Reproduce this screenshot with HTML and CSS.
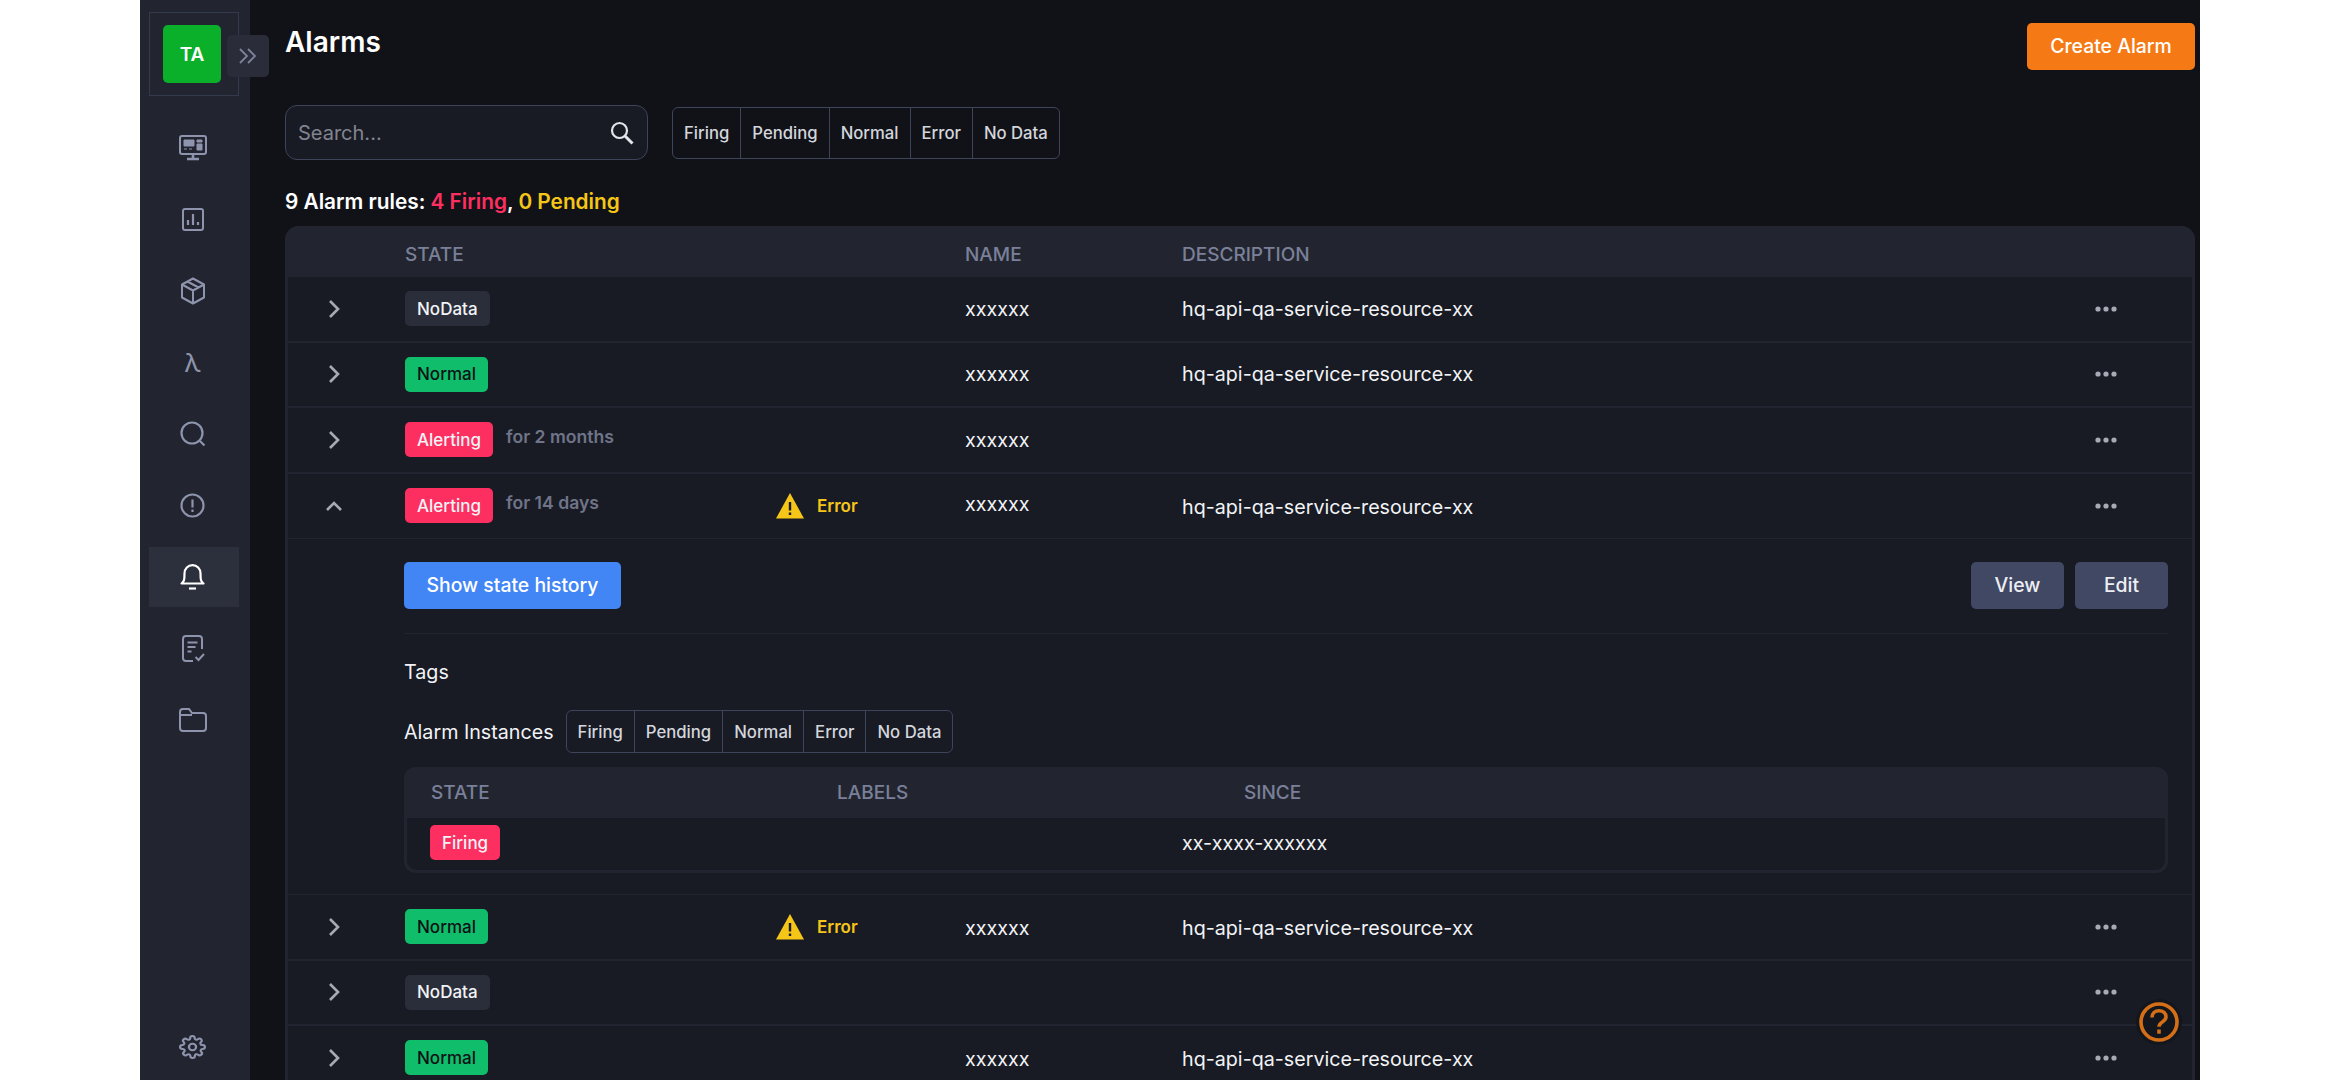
FILE: index.html
```html
<!DOCTYPE html>
<html lang="en">
<head>
    <meta charset="UTF-8">
    <meta name="viewport" content="width=device-width, initial-scale=1.0">
    <title>Alarms</title>
    <link rel="stylesheet" href="styles.css">
</head>
<body>
    <svg class="sprite" aria-hidden="true">
        <symbol id="chevron-right" viewBox="0 0 12 20"><path d="M2 2l8 8-8 8" fill="none" stroke="currentColor" stroke-width="2.6"/></symbol>
        <symbol id="chevron-up" viewBox="0 0 18 12"><path d="M2 10l7-7 7 7" fill="none" stroke="currentColor" stroke-width="2.6"/></symbol>
        <symbol id="dots" viewBox="0 0 22 6"><circle cx="3" cy="3" r="2.6"/><circle cx="11" cy="3" r="2.6"/><circle cx="19" cy="3" r="2.6"/></symbol>
        <symbol id="warning" viewBox="0 0 28 26"><path d="M14 0L28 25.500H0z"/><path d="M12.800 9h2.400v8.500h-2.400zM12.800 19.500h2.400v2.400h-2.400z" fill="#181b24"/></symbol>
    </svg>

    <div class="app">
        <aside class="sidebar">
            <div class="logo-box">
                <div class="logo">TA</div>
                <button class="collapse">
                    <svg width="20" height="18" viewBox="0 0 20 18" fill="none" stroke="currentColor" stroke-width="1.800"><path d="M2 2l7 7-7 7M10 2l7 7-7 7"/></svg>
                </button>
            </div>
            <nav class="nav">
                <a class="nav-item">
                    <svg width="28" height="26" viewBox="0 0 28 26" fill="none" stroke="currentColor" stroke-width="2"><rect x="1" y="1" width="26" height="18" rx="2"/><path d="M14 19v4M8 24h12" stroke-width="2.600"/><path d="M5 5h10v6H5zM5 14h3M10 14h3M18 5h5v2h-5zM18 9h5v6h-5z" fill="currentColor" stroke-width="1"/></svg>
                </a>
                <a class="nav-item">
                    <svg width="22" height="23" viewBox="0 0 22 23" fill="none" stroke="currentColor" stroke-width="2"><rect x="1" y="1" width="20" height="21" rx="2"/><path d="M6 17v-5M11 17V6M16 17v-3" stroke-width="2.200"/></svg>
                </a>
                <a class="nav-item">
                    <svg width="26" height="28" viewBox="0 0 26 28" fill="none" stroke="currentColor" stroke-width="2" stroke-linejoin="round"><path d="M13 1.500l11 6v13l-11 6-11-6v-13zM2 7.500l11 6 11-6M13 13.500v13M7.500 4.500l11 6"/></svg>
                </a>
                <a class="nav-item lambda">λ</a>
                <a class="nav-item">
                    <svg width="26" height="26" viewBox="0 0 26 26" fill="none" stroke="currentColor" stroke-width="2.200"><circle cx="12" cy="12" r="10.500"/><path d="M20 20l4.500 4.500"/></svg>
                </a>
                <a class="nav-item">
                    <svg width="25" height="25" viewBox="0 0 25 25" fill="none" stroke="currentColor" stroke-width="2.200"><circle cx="12.500" cy="12.500" r="11"/><path d="M12.500 6.500v8M12.500 16.500v2.500"/></svg>
                </a>
                <a class="nav-item active">
                    <svg width="25" height="26" viewBox="0 0 25 26" fill="none" stroke="currentColor" stroke-width="2.200"><path d="M1.500 19.500c2.500-2 3-3 3-10C4.500 4.500 8 1.200 12.500 1.200s8 3.300 8 8.300c0 7 .5 8 3 10z" stroke-linejoin="round"/><path d="M9 24.500h7"/></svg>
                </a>
                <a class="nav-item">
                    <svg width="24" height="27" viewBox="0 0 24 27" fill="none" stroke="currentColor" stroke-width="2"><path d="M21 14V4a3 3 0 0 0-3-3H5a3 3 0 0 0-3 3v19a3 3 0 0 0 3 3h7"/><path d="M6.500 7.500h10M6.500 12h8M6.500 16.500h4M14.500 22l3 3 5.500-6"/></svg>
                </a>
                <a class="nav-item">
                    <svg width="28" height="24" viewBox="0 0 28 24" fill="none" stroke="currentColor" stroke-width="2"><path d="M1 4a3 3 0 0 1 3-3h6l3 4h11a3 3 0 0 1 3 3v12a3 3 0 0 1-3 3H4a3 3 0 0 1-3-3z"/><path d="M1 7h12"/></svg>
                </a>
                <a class="nav-item nav-bottom">
                    <svg width="27" height="24" viewBox="0 0 24 24" preserveAspectRatio="none" fill="none" stroke="currentColor" stroke-width="2"><circle cx="12" cy="12" r="3.200"/><path d="M19.400 15a1.650 1.650 0 0 0 .33 1.820l.06.06a2 2 0 0 1-2.830 2.830l-.06-.06a1.650 1.650 0 0 0-2.820 1.180V21a2 2 0 0 1-4 0v-.09a1.650 1.650 0 0 0-2.820-1.180l-.06.06a2 2 0 0 1-2.830-2.830l.06-.06A1.650 1.650 0 0 0 3.090 14H3a2 2 0 0 1 0-4h.09a1.650 1.650 0 0 0 1.180-2.820l-.06-.06a2 2 0 0 1 2.830-2.830l.06.06A1.650 1.650 0 0 0 9.920 3.170V3a2 2 0 0 1 4 0v.09a1.650 1.650 0 0 0 2.820 1.180l.06-.06a2 2 0 0 1 2.830 2.830l-.06.06A1.650 1.650 0 0 0 20.910 10H21a2 2 0 0 1 0 4h-.09a1.650 1.650 0 0 0-1.510 1z"/></svg>
                </a>
            </nav>
        </aside>

        <main class="main">
            <header class="page-header">
                <h1>Alarms</h1>
                <button class="btn btn-orange">Create Alarm</button>
            </header>

            <div class="toolbar">
                <div class="search">
                    <span class="search-text">Search...</span>
                    <svg width="24" height="24" viewBox="0 0 24 24" fill="none" stroke="#e4e5ea" stroke-width="2.200"><circle cx="9.500" cy="9.500" r="7.500"/><path d="M15 15l7.500 7.500" stroke-width="3"/></svg>
                </div>
                <div class="filters">
                    <span>Firing</span><span>Pending</span><span>Normal</span><span>Error</span><span>No Data</span>
                </div>
            </div>

            <p class="summary">9 Alarm rules: <span class="red">4 Firing</span>, <span class="yellow">0 Pending</span></p>

            <section class="table">
                <div class="row table-head">
                    <div></div>
                    <div>STATE</div>
                    <div>NAME</div>
                    <div>DESCRIPTION</div>
                    <div></div>
                </div>

                <div class="row">
                    <svg class="chev" width="12" height="20"><use href="#chevron-right"/></svg>
                    <div class="state"><div class="state-main"><span class="badge badge-grey">NoData</span></div></div>
                    <div>xxxxxx</div>
                    <div>hq-api-qa-service-resource-xx</div>
                    <svg class="dots" width="22" height="6"><use href="#dots"/></svg>
                </div>
                <div class="row">
                    <svg class="chev" width="12" height="20"><use href="#chevron-right"/></svg>
                    <div class="state"><div class="state-main"><span class="badge badge-green">Normal</span></div></div>
                    <div>xxxxxx</div>
                    <div>hq-api-qa-service-resource-xx</div>
                    <svg class="dots" width="22" height="6"><use href="#dots"/></svg>
                </div>
                <div class="row">
                    <svg class="chev" width="12" height="20"><use href="#chevron-right"/></svg>
                    <div class="state"><div class="state-main"><span class="badge badge-red">Alerting</span><span class="since">for 2 months</span></div></div>
                    <div>xxxxxx</div>
                    <div></div>
                    <svg class="dots" width="22" height="6"><use href="#dots"/></svg>
                </div>
                <div class="row row-open">
                    <svg class="chev" width="18" height="12"><use href="#chevron-up"/></svg>
                    <div class="state">
                        <div class="state-main"><span class="badge badge-red">Alerting</span><span class="since">for 14 days</span></div>
                        <div class="health"><svg width="28" height="26" fill="#f5c518"><use href="#warning"/></svg>Error</div>
                    </div>
                    <div class="name-up">xxxxxx</div>
                    <div class="desc-down">hq-api-qa-service-resource-xx</div>
                    <svg class="dots" width="22" height="6"><use href="#dots"/></svg>
                </div>

                <div class="details">
                    <div class="details-actions">
                        <button class="btn btn-blue">Show state history</button>
                        <div class="btn-group">
                            <button class="btn btn-slate">View</button>
                            <button class="btn btn-slate">Edit</button>
                        </div>
                    </div>
                    <div class="tags">Tags</div>
                    <div class="instances-bar">
                        <span>Alarm Instances</span>
                        <div class="filters filters-small">
                            <span>Firing</span><span>Pending</span><span>Normal</span><span>Error</span><span>No Data</span>
                        </div>
                    </div>
                    <div class="instances">
                        <div class="instances-head">
                            <div>STATE</div>
                            <div>LABELS</div>
                            <div>SINCE</div>
                        </div>
                        <div class="instances-row">
                            <span class="badge badge-red">Firing</span>
                            <div>xx-xxxx-xxxxxx</div>
                        </div>
                    </div>
                </div>

                <div class="row">
                    <svg class="chev" width="12" height="20"><use href="#chevron-right"/></svg>
                    <div class="state">
                        <div class="state-main"><span class="badge badge-green">Normal</span></div>
                        <div class="health"><svg width="28" height="26" fill="#f5c518"><use href="#warning"/></svg>Error</div>
                    </div>
                    <div class="cell-down">xxxxxx</div>
                    <div class="cell-down">hq-api-qa-service-resource-xx</div>
                    <svg class="dots" width="22" height="6"><use href="#dots"/></svg>
                </div>
                <div class="row">
                    <svg class="chev" width="12" height="20"><use href="#chevron-right"/></svg>
                    <div class="state"><div class="state-main"><span class="badge badge-grey">NoData</span></div></div>
                    <div></div>
                    <div></div>
                    <svg class="dots" width="22" height="6"><use href="#dots"/></svg>
                </div>
                <div class="row">
                    <svg class="chev" width="12" height="20"><use href="#chevron-right"/></svg>
                    <div class="state"><div class="state-main"><span class="badge badge-green">Normal</span></div></div>
                    <div class="cell-down">xxxxxx</div>
                    <div class="cell-down">hq-api-qa-service-resource-xx</div>
                    <svg class="dots" width="22" height="6"><use href="#dots"/></svg>
                </div>
            </section>
        </main>

        <button class="help">
            <svg width="40" height="40" viewBox="0 0 40 40" fill="none" stroke="#d46f17" stroke-width="3.600"><circle cx="20" cy="20" r="18"/><path d="M13 15.500c0-4.200 3-6.800 7-6.800s7 2.600 7 6.300c0 4.800-7 5-7 9.800"/><path d="M20 27.500v4.200"/></svg>
        </button>
    </div>
</body>
</html>
```

FILE: styles.css
```css
* {
    box-sizing: border-box;
    margin: 0;
    padding: 0;
}

body {
    font-family: Inter, "Noto Sans", sans-serif;
    background-color: #fff;
    color: #fff;
    padding: 0 140px;
    height: 1080px;
    overflow: hidden;
}

button {
    font-family: inherit;
    border: none;
}

.sprite {
    display: none;
}

.app {
    position: relative;
    display: flex;
    height: 1080px;
    background-color: #111217;
    overflow: hidden;
}

/* sidebar */
.sidebar {
    flex: 0 0 110px;
    display: flex;
    flex-direction: column;
    align-items: flex-start;
    padding: 12px 0 3px 9px;
    background-color: #22252f;
}

.logo-box {
    position: relative;
    width: 90px;
    height: 84px;
    padding: 12px 0 0 13px;
    border: 1px solid #343a4d;
}

.logo {
    display: flex;
    align-items: center;
    justify-content: center;
    width: 58px;
    height: 58px;
    border-radius: 5px;
    background-color: #0aaf2a;
    font-size: 19px;
    font-weight: 600;
}

.collapse {
    position: absolute;
    top: 22px;
    left: 77px;
    display: flex;
    align-items: center;
    justify-content: center;
    width: 42px;
    height: 42px;
    border-radius: 5px;
    background-color: #2a2d39;
    color: #7c829a;
}

.nav {
    flex: 1;
    display: flex;
    flex-direction: column;
    gap: 12px;
    margin-top: 22px;
}

.nav-item {
    display: flex;
    align-items: center;
    justify-content: center;
    width: 90px;
    height: 59.500px;
    padding-right: 3px;
    color: #8e94ad;
}

.nav-item.active {
    background-color: #2c303d;
    color: #fff;
}

.nav-bottom {
    margin-top: auto;
}

.lambda {
    font-size: 26px;
}

/* main */
.main {
    flex: 1;
    min-width: 0;
    padding: 23px 5px 0 35px;
}

.page-header {
    display: flex;
    justify-content: space-between;
    align-items: flex-start;
}

.page-header h1 {
    font-size: 28px;
    font-weight: 600;
    line-height: 38px;
}

.btn {
    height: 47px;
    padding-bottom: 2px;
    border-radius: 5px;
    color: #fff;
    font-size: 19.400px;
    font-weight: 500;
}

.btn-orange {
    width: 168px;
    background-color: #f57a15;
}

.btn-blue {
    width: 217px;
    background-color: #4285f4;
}

.btn-slate {
    width: 93px;
    background-color: #414863;
    color: #eceef3;
}

.toolbar {
    display: flex;
    align-items: center;
    gap: 24px;
    margin-top: 35px;
}

.search {
    display: flex;
    align-items: center;
    justify-content: space-between;
    width: 363px;
    height: 55px;
    padding: 0 13px 0 12px;
    border: 1.500px solid #3e4459;
    border-radius: 12px;
    background-color: #181b24;
    color: #82858f;
    font-size: 20px;
}

.filters {
    display: flex;
    height: 52px;
    border: 1.500px solid #3e4459;
    border-radius: 6px;
    color: #d4d6dd;
    font-size: 16.700px;
    font-weight: 500;
}

.filters span {
    display: flex;
    align-items: center;
    padding: 0 11px;
    border-left: 1.500px solid #3e4459;
}

.filters span:first-child {
    border-left: none;
}

.filters-small {
    height: 43px;
}

.summary {
    margin-top: 30px;
    font-size: 20.800px;
    font-weight: 600;
    line-height: 24px;
}

.red {
    color: #fc2f60;
}

.yellow {
    color: #f5c518;
}

/* table */
.table {
    margin-top: 12px;
    border: 3px solid #22252f;
    border-top: none;
    border-radius: 14px 14px 0 0;
    background-color: #181b24;
    font-size: 19.700px;
}

.row {
    display: grid;
    grid-template-columns: 117px 560px 217px 1fr 62px;
    align-items: center;
    height: 65.500px;
    padding-right: 75px;
    border-bottom: 2.500px solid #22252f;
    color: #f2f3f6;
}

.table-head {
    height: 51px;
    padding-top: 5px;
    border-bottom: none;
    border-radius: 14px 14px 0 0;
    margin: 0 -3px;
    padding-right: 78px;
    padding-left: 3px;
    background-color: #22252f;
    color: #7a8099;
    font-size: 19px;
    font-weight: 500;
}

.row-open {
    border-bottom: 1px solid #22252f;
}

.chev {
    justify-self: center;
    margin-right: 25px;
    color: #a7a9b4;
    fill: currentColor;
}

.dots {
    justify-self: end;
    fill: #a7a9b4;
}

.state {
    display: grid;
    grid-template-columns: 371px 1fr;
    align-items: center;
}

.state-main {
    display: flex;
    align-items: center;
}

.name-up {
    margin-top: -3px;
}

.desc-down {
    margin-top: 3px;
}

.cell-down {
    margin-top: 3px;
}

.badge {
    display: inline-flex;
    align-items: center;
    height: 35px;
    padding: 0 12px;
    border-radius: 5px;
    font-size: 17px;
    font-weight: 500;
}

.badge-grey {
    background-color: #2a2e3a;
}

.badge-green {
    background-color: #10bd6a;
    color: #0b1016;
}

.badge-red {
    background-color: #fc2f60;
}

.since {
    margin: -6px 0 0 13px;
    color: #6f7488;
    font-size: 17.600px;
    font-weight: 600;
}

.health {
    display: flex;
    align-items: center;
    gap: 13px;
    color: #f5c518;
    font-size: 17px;
    font-weight: 600;
}

/* expanded row */
.details {
    height: 356px;
    padding: 23px 24px 0 116px;
    border-bottom: 1px solid #22252f;
    color: #f2f3f6;
}

.details-actions {
    display: flex;
    justify-content: space-between;
    padding-bottom: 24px;
    border-bottom: 1px solid #22252f;
}

.btn-group {
    display: flex;
    gap: 11px;
}

.tags {
    margin-top: 26px;
    line-height: 24px;
}

.instances-bar {
    display: flex;
    align-items: center;
    gap: 12px;
    margin-top: 26px;
}

.instances {
    margin-top: 14px;
    border: 3px solid #22252f;
    border-top: none;
    border-radius: 12px;
}

.instances-head {
    display: grid;
    grid-template-columns: 406px 407px 1fr;
    align-items: center;
    height: 51px;
    margin: 0 -3px;
    padding-left: 27px;
    border-radius: 12px 12px 0 0;
    background-color: #22252f;
    color: #7a8099;
    font-size: 19px;
    font-weight: 500;
}

.instances-row {
    display: grid;
    grid-template-columns: 752px 1fr;
    justify-items: start;
    align-items: center;
    height: 52px;
    padding: 0 0 3px 23px;
}

.help {
    position: absolute;
    left: 1996px;
    top: 999px;
    display: flex;
    align-items: center;
    justify-content: center;
    width: 46px;
    height: 46px;
    border-radius: 50%;
    background-color: #14161d;
}
```
